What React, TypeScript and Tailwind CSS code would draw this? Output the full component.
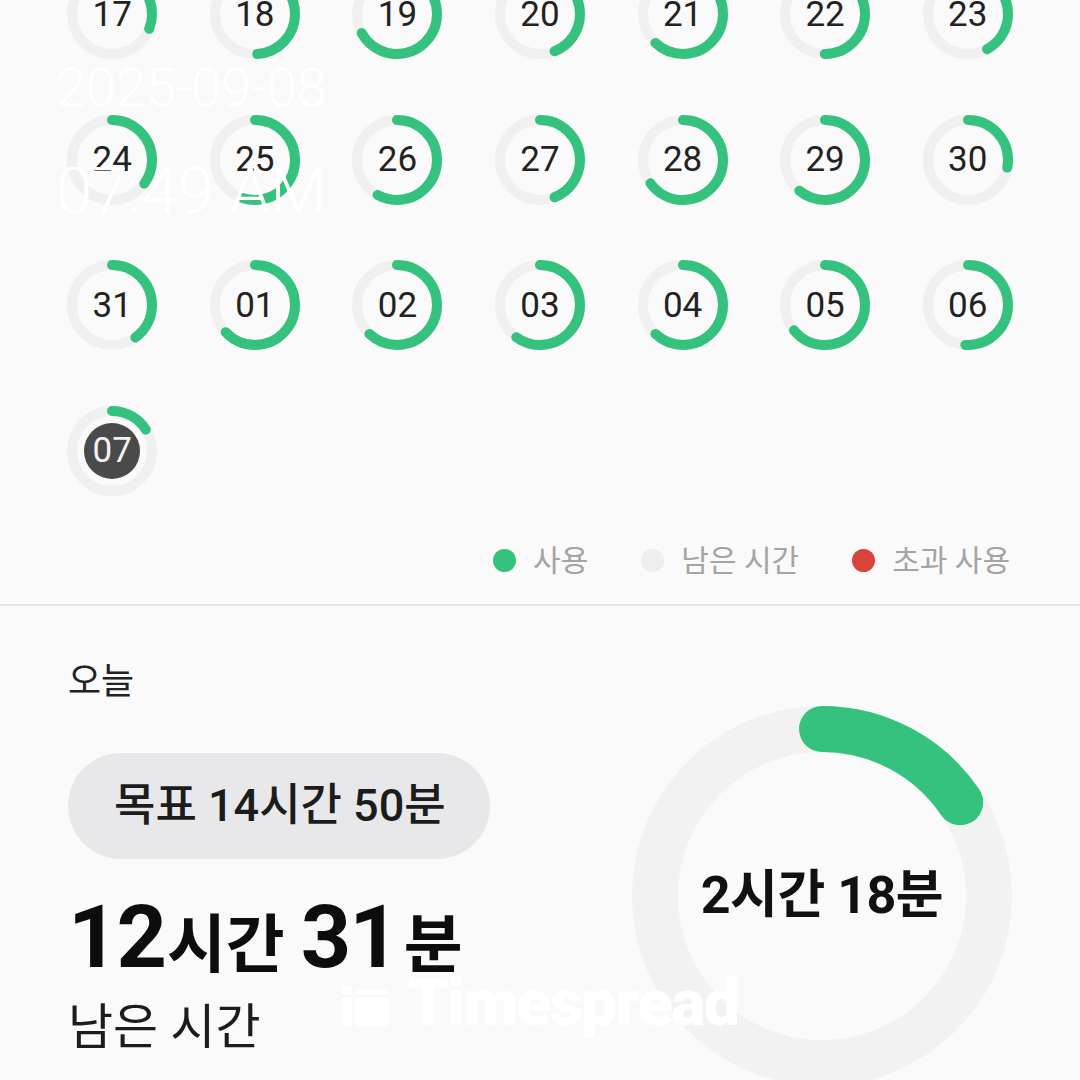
import React from "react";

const GREEN = "#35c27e";

const days = [
  { d: "17", p: 0.31 },
  { d: "18", p: 0.49 },
  { d: "19", p: 0.67 },
  { d: "20", p: 0.44 },
  { d: "21", p: 0.62 },
  { d: "22", p: 0.5 },
  { d: "23", p: 0.42 },
  { d: "24", p: 0.35 },
  { d: "25", p: 0.55 },
  { d: "26", p: 0.58 },
  { d: "27", p: 0.44 },
  { d: "28", p: 0.65 },
  { d: "29", p: 0.61 },
  { d: "30", p: 0.28 },
  { d: "31", p: 0.4 },
  { d: "01", p: 0.63 },
  { d: "02", p: 0.62 },
  { d: "03", p: 0.6 },
  { d: "04", p: 0.62 },
  { d: "05", p: 0.64 },
  { d: "06", p: 0.51 },
  { d: "07", p: 0.16, today: true },
];

function DayRing({ d, p, today }: { d: string; p: number; today?: boolean }) {
  const r = 40;
  const c = 2 * Math.PI * r;
  return (
    <div className="relative w-[90px] h-[90px] flex items-center justify-center">
      <svg width="90" height="90" viewBox="0 0 90 90" className="absolute inset-0">
        <circle cx="45" cy="45" r={r} fill="none" stroke="#f0f0f0" strokeWidth="10" />
        <circle
          cx="45"
          cy="45"
          r={r}
          fill="none"
          stroke={GREEN}
          strokeWidth="10"
          strokeLinecap="round"
          strokeDasharray={`${c * p} ${c}`}
          transform="rotate(-90 45 45)"
        />
        {today && <circle cx="45" cy="45" r="28" fill="#4a4a4a" />}
      </svg>
      <span className={`relative text-[35px] leading-none ${today ? "text-[#f2f2f2]" : "text-[#222]"}`}>{d}</span>
    </div>
  );
}

function Legend({ color, label }: { color: string; label: string }) {
  return (
    <div className="flex items-center gap-[17px]">
      <span className="w-[23px] h-[23px] rounded-full" style={{ background: color }} />
      <span className="text-[30px] text-[#a4a4a4] leading-none">{label}</span>
    </div>
  );
}

function BigRing() {
  const r = 167;
  const c = 2 * Math.PI * r;
  const p = 138 / 890;
  return (
    <div className="relative w-[380px] h-[380px] flex items-center justify-center shrink-0">
      <svg width="380" height="380" viewBox="0 0 380 380" className="absolute inset-0">
        <circle cx="190" cy="190" r={r} fill="none" stroke="#f2f2f2" strokeWidth="46" />
        <circle
          cx="190"
          cy="190"
          r={r}
          fill="none"
          stroke={GREEN}
          strokeWidth="46"
          strokeLinecap="round"
          strokeDasharray={`${c * p} ${c}`}
          transform="rotate(-90 190 190)"
        />
      </svg>
      <span className="relative text-[52px] font-bold text-[#111] leading-none tracking-[-0.5px]">2시간 18분</span>
    </div>
  );
}

export default function App() {
  return (
    <div
      className="relative w-[1080px] h-[1080px] overflow-hidden bg-[#fafafa]"
      style={{ fontFamily: 'Roboto, "Noto Sans CJK KR", sans-serif' }}
    >
      <div className="grid grid-cols-7 gap-y-[55.5px] px-[41px] -mt-[31px] justify-items-center">
        {days.map((day) => (
          <DayRing key={day.d} {...day} />
        ))}
      </div>

      <div className="flex justify-end items-center gap-[53px] pr-[70px] mt-[50px] h-[30px]">
        <Legend color={GREEN} label="사용" />
        <Legend color="#eeeeee" label="남은 시간" />
        <Legend color="#d8433a" label="초과 사용" />
      </div>

      <div className="mt-[28px] h-[2px] bg-[#e4e4e4]" />

      <div className="px-[68px] pt-[58px]">
        <div className="text-[36px] text-[#222] leading-none">오늘</div>
        <div className="flex justify-between mt-[6px]">
          <div className="flex flex-col pt-[47px]">
            <div className="w-[422px] h-[106px] rounded-full bg-[#e8e8ea] flex items-center pl-[46px]">
              <span className="text-[45px] font-medium text-[#1c1c1c] leading-none">목표 14시간 50분</span>
            </div>
            <div className="flex items-baseline mt-[34px] text-[#0d0d0d] font-bold leading-none">
              <span className="text-[88px] tracking-[-2px]">12</span>
              <span className="text-[64px] ml-[2px]">시간</span>
              <span className="text-[88px] ml-[16px] tracking-[-2px]">31</span>
              <span className="text-[64px] ml-[6px]">분</span>
            </div>
            <div className="text-[49px] text-[#1c1c1c] mt-[22px] leading-none">남은 시간</div>
          </div>
          <BigRing />
        </div>
      </div>

      <div className="absolute left-[56px] top-[61px] text-white font-light leading-none">
        <div className="text-[54px]">2025-09-08</div>
        <div className="text-[65px] mt-[44px]">07:49 AM</div>
      </div>

      <div className="absolute left-[342px] top-[972px] flex items-center gap-[20px] text-white">
        <svg width="46" height="44" viewBox="0 0 46 44" fill="#ffffff">
          <rect x="0" y="4" width="10" height="8" />
          <rect x="0" y="16" width="10" height="28" />
          <rect x="14" y="8" width="32" height="4" />
          <rect x="14" y="16" width="32" height="28" />
        </svg>
        <span className="text-[64px] font-black tracking-[-1.5px] leading-none">Timespread</span>
      </div>
    </div>
  );
}
